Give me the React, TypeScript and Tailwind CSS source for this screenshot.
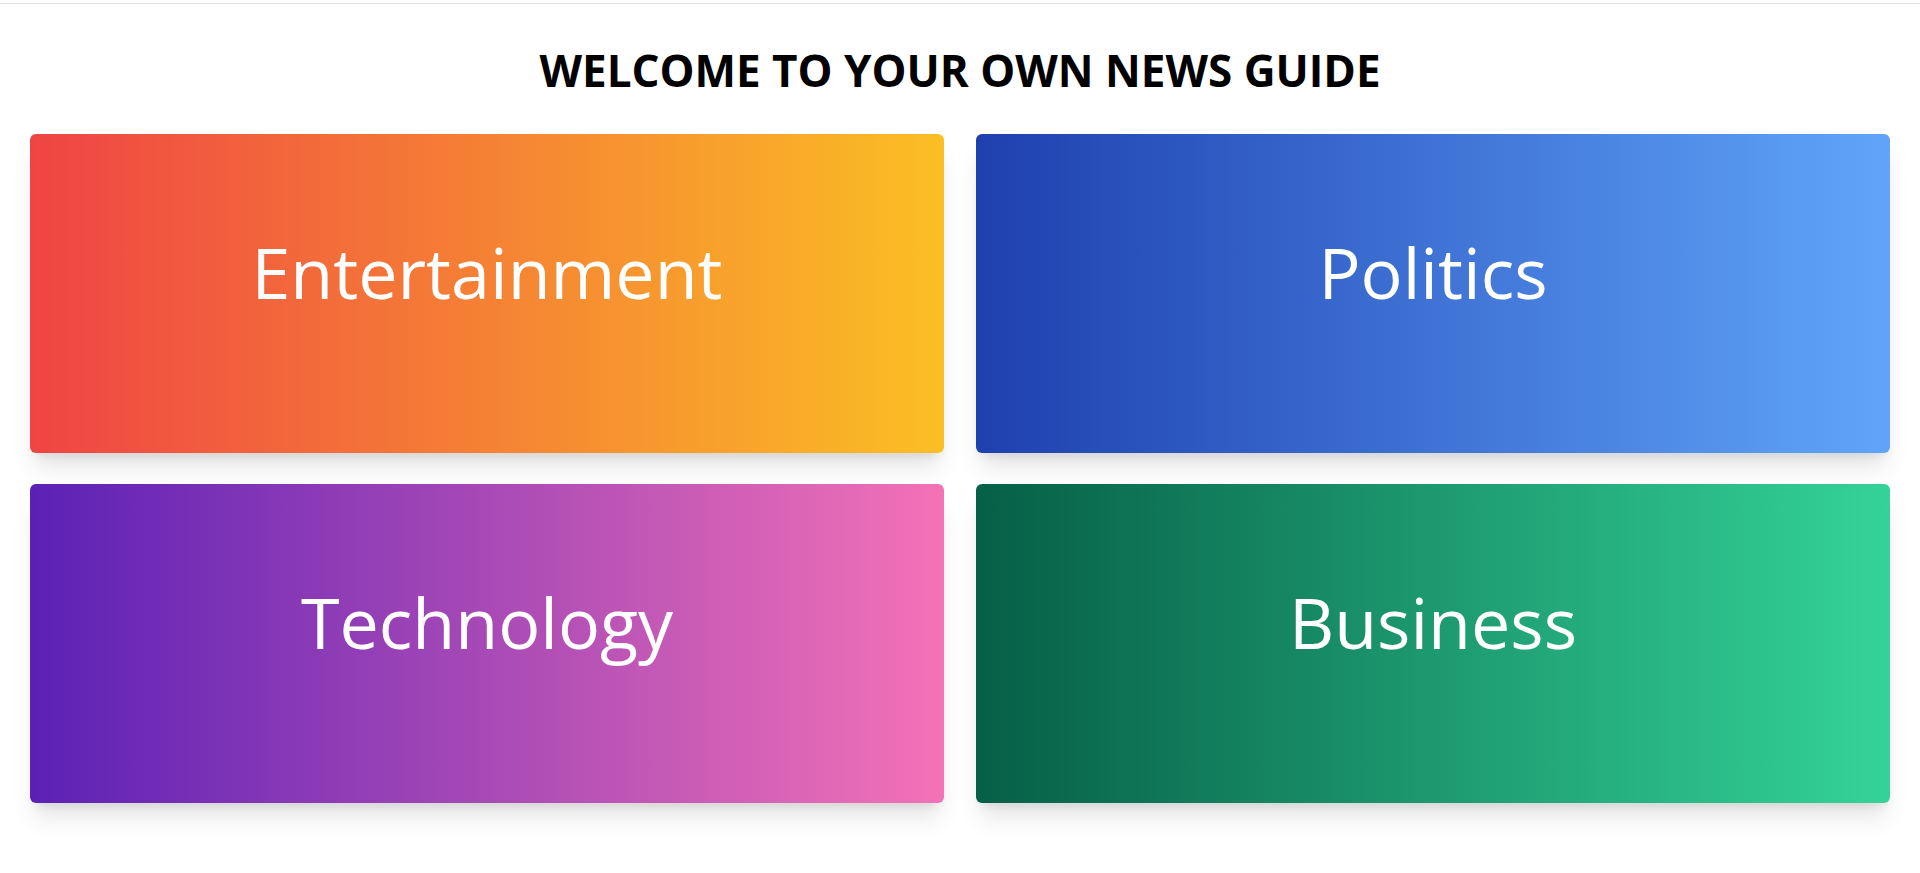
const categories = [
  { title: "Entertainment", bg: "bg-[linear-gradient(to_right,#ef4444,#fbbf24)]" },
  { title: "Politics", bg: "bg-[linear-gradient(to_right,#1e40af,#60a5fa)]" },
  { title: "Technology", bg: "bg-[linear-gradient(to_right,#5b21b6,#f472b6)]" },
  { title: "Business", bg: "bg-[linear-gradient(to_right,#065f46,#34d399)]" },
];

const App = () => {
  return (
    <div className="min-h-screen bg-white font-['Open_Sans',sans-serif]">
      <div className="h-[4px] border-b border-[#dddddd]" />
      <main className="px-[30px]">
        <h1 className="pt-[36px] mb-[34px] text-center text-[44px] leading-[60px] font-bold text-black">
          WELCOME TO YOUR OWN NEWS GUIDE
        </h1>
        <div className="grid grid-cols-2 gap-x-8 gap-y-[31px]">
          {categories.map((item) => (
            <div
              key={item.title}
              className={`flex h-[319px] items-center justify-center rounded-md shadow-xl cursor-pointer ${item.bg}`}
            >
              <p className="-mt-[43px] text-[70px] text-white">{item.title}</p>
            </div>
          ))}
        </div>
      </main>
    </div>
  );
};

export default App;
